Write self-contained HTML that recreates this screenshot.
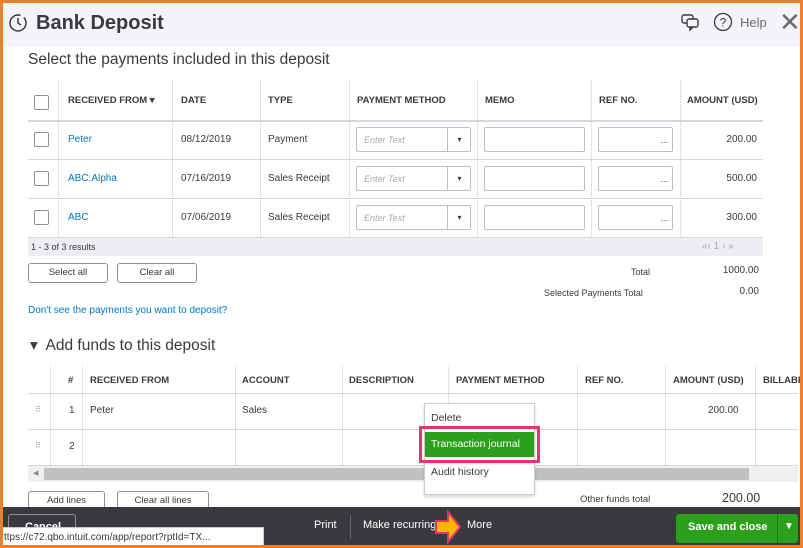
<!DOCTYPE html><html><head><style>
*{box-sizing:border-box;margin:0;padding:0}
body{width:803px;height:548px;overflow:hidden;background:#fff;font-family:"Liberation Sans",sans-serif;color:#393a3d;position:relative}
.a{position:absolute}
.f{border:3px solid #ee7f2d;position:absolute;left:0;top:0;width:803px;height:548px;z-index:20;pointer-events:none}
.hd{left:0;top:0;width:803px;height:47px;background:#f4f5f8}
.t{font-size:10px}
.h{font-size:9.5px;font-weight:bold;color:#393a3d}
.cb{width:15px;height:15px;border:1px solid #8d9096;background:#fff;border-radius:2px}
.ln{height:1px;background:#d4d7dc}
.vl{width:0;border-left:1px dotted #c8c8c8}
.lk{color:#0077c5;font-size:10px}
.in{height:25px;border:1px solid #babec5;background:#fff;border-radius:2px}
.btn{height:20px;border:1px solid #8d9096;border-radius:3px;font-size:9.5px;text-align:center;line-height:18px;background:#fff}
</style></head><body>
<div class="f"></div>
<div class="a hd"></div>
<svg class="a" style="left:8px;top:13px" width="20" height="20" viewBox="0 0 20 20"><circle cx="10" cy="10" r="8" fill="none" stroke="#393a3d" stroke-width="1.5" stroke-dasharray="40 4"/><path d="M10 5v5l3 2" fill="none" stroke="#393a3d" stroke-width="1.5"/></svg>
<div class="a" style="left:36px;top:12px;font-size:20px;font-weight:bold">Bank Deposit</div>
<svg class="a" style="left:680px;top:12px" width="20" height="20" viewBox="0 0 20 20"><rect x="2" y="3" width="11" height="8" rx="2" fill="none" stroke="#393a3d" stroke-width="1.4"/><rect x="7" y="7" width="11" height="8" rx="2" fill="#f4f5f8" stroke="#393a3d" stroke-width="1.4"/><path d="M10 15l0 3 3-3" fill="none" stroke="#393a3d" stroke-width="1.4"/></svg>
<svg class="a" style="left:713px;top:12px" width="20" height="20" viewBox="0 0 20 20"><circle cx="10" cy="10" r="8.5" fill="none" stroke="#393a3d" stroke-width="1.3"/><text x="10" y="14.5" font-size="12" text-anchor="middle" fill="#393a3d" font-family="Liberation Sans">?</text></svg>
<div class="a" style="left:740px;top:15px;font-size:13px;color:#6b6c72">Help</div>
<div class="a" style="left:779px;top:7px;font-size:26px;color:#6b6c72;font-weight:300">✕</div>
<div class="a" style="left:28px;top:51px;font-size:15.5px">Select the payments included in this deposit</div>
<div class="a cb" style="left:34px;top:95px"></div>
<div class="a h" style="left:68px;top:95px">RECEIVED FROM ▾</div>
<div class="a h" style="left:181px;top:95px">DATE</div>
<div class="a h" style="left:268px;top:95px">TYPE</div>
<div class="a h" style="left:357px;top:95px">PAYMENT METHOD</div>
<div class="a h" style="left:485px;top:95px">MEMO</div>
<div class="a h" style="left:599px;top:95px">REF NO.</div>
<div class="a h" style="left:687px;top:95px">AMOUNT (USD)</div>
<div class="a vl" style="left:58px;top:80px;height:157px"></div>
<div class="a vl" style="left:172px;top:80px;height:157px"></div>
<div class="a vl" style="left:260px;top:80px;height:157px"></div>
<div class="a vl" style="left:349px;top:80px;height:157px"></div>
<div class="a vl" style="left:477px;top:80px;height:157px"></div>
<div class="a vl" style="left:591px;top:80px;height:157px"></div>
<div class="a vl" style="left:680px;top:80px;height:157px"></div>
<div class="a ln" style="left:28px;top:120px;width:735px;height:2px"></div>
<div class="a ln" style="left:28px;top:159px;width:735px"></div>
<div class="a ln" style="left:28px;top:198px;width:735px"></div>
<div class="a ln" style="left:28px;top:237px;width:735px"></div>

<div class="a cb" style="left:34px;top:132px"></div><div class="a lk" style="left:68px;top:134px">Peter</div><div class="a t" style="left:181px;top:134px">08/12/2019</div><div class="a t" style="left:268px;top:134px">Payment</div>
<div class="a cb" style="left:34px;top:171px"></div><div class="a lk" style="left:68px;top:173px">ABC:Alpha</div><div class="a t" style="left:181px;top:173px">07/16/2019</div><div class="a t" style="left:268px;top:173px">Sales Receipt</div>
<div class="a cb" style="left:34px;top:210px"></div><div class="a lk" style="left:68px;top:212px">ABC</div><div class="a t" style="left:181px;top:212px">07/06/2019</div><div class="a t" style="left:268px;top:212px">Sales Receipt</div>
<script>
[127,166,205].forEach((y,i)=>{document.body.insertAdjacentHTML('beforeend',
`<div class="a in" style="left:356px;top:${y}px;width:115px"><span style="position:absolute;left:7px;top:7px;font-size:9px;font-style:italic;color:#aaa">Enter Text</span><span style="position:absolute;left:90px;top:0;height:23px;border-left:1px solid #babec5;width:24px;font-size:8px;text-align:center;line-height:23px">▾</span></div>
<div class="a in" style="left:484px;top:${y}px;width:101px"></div>
<div class="a in" style="left:598px;top:${y}px;width:75px"><span style="position:absolute;right:4px;top:7px;font-size:9px">...</span></div>
<div class="a t" style="right:46px;top:${y+7}px">${['200.00','500.00','300.00'][i]}</div>`)});
</script>
<div class="a" style="left:28px;top:238px;width:735px;height:18px;background:#eceef1"></div>
<div class="a" style="left:31px;top:242px;font-size:9px">1 - 3 of 3 results</div>
<div class="a" style="left:702px;top:241px;font-size:10px;color:#aaa">«‹ 1 › »</div>
<div class="a btn" style="left:28px;top:263px;width:80px">Select all</div>
<div class="a btn" style="left:117px;top:263px;width:80px">Clear all</div>
<div class="a t" style="left:631px;top:267px;font-size:9px">Total</div>
<div class="a t" style="right:44px;top:265px">1000.00</div>
<div class="a" style="left:544px;top:288px;font-size:9px">Selected Payments Total</div>
<div class="a t" style="right:44px;top:286px">0.00</div>
<div class="a lk" style="left:28px;top:305px">Don't see the payments you want to deposit?</div>
<div class="a" style="left:30px;top:336px;font-size:15.5px">▾&nbsp; Add funds to this deposit</div>
<div class="a h" style="left:68px;top:375px">#</div>
<div class="a h" style="left:90px;top:375px">RECEIVED FROM</div>
<div class="a h" style="left:242px;top:375px">ACCOUNT</div>
<div class="a h" style="left:349px;top:375px">DESCRIPTION</div>
<div class="a h" style="left:456px;top:375px">PAYMENT METHOD</div>
<div class="a h" style="left:585px;top:375px">REF NO.</div>
<div class="a h" style="left:673px;top:375px">AMOUNT (USD)</div>
<div class="a h" style="left:763px;top:375px">BILLABLE</div>
<div class="a vl" style="left:50px;top:366px;height:99px"></div>
<div class="a vl" style="left:82px;top:366px;height:99px"></div>
<div class="a vl" style="left:235px;top:366px;height:99px"></div>
<div class="a vl" style="left:342px;top:366px;height:99px"></div>
<div class="a vl" style="left:448px;top:366px;height:99px"></div>
<div class="a vl" style="left:577px;top:366px;height:99px"></div>
<div class="a vl" style="left:665px;top:366px;height:99px"></div>
<div class="a vl" style="left:755px;top:366px;height:99px"></div>
<div class="a ln" style="left:28px;top:393px;width:770px"></div>
<div class="a ln" style="left:28px;top:429px;width:770px"></div>
<div class="a ln" style="left:28px;top:465px;width:770px"></div>
<div class="a" style="left:35px;top:405px;font-size:8px;color:#999">⠿</div>
<div class="a" style="left:35px;top:441px;font-size:8px;color:#999">⠿</div>
<div class="a t" style="left:69px;top:405px">1</div><div class="a t" style="left:90px;top:405px">Peter</div><div class="a t" style="left:242px;top:405px">Sales</div><div class="a t" style="left:708px;top:405px">200.00</div>
<div class="a t" style="left:69px;top:441px">2</div>
<div class="a" style="left:28px;top:466px;width:770px;height:16px;background:#f0f0f0"></div>
<div class="a" style="left:44px;top:468px;width:705px;height:12px;background:#c1c1c1"></div>
<div class="a" style="left:33px;top:469px;font-size:7px;color:#888">◀</div>
<div class="a btn" style="left:28px;top:491px;width:77px">Add lines</div>
<div class="a btn" style="left:117px;top:491px;width:92px">Clear all lines</div>
<div class="a" style="left:580px;top:494px;font-size:9.5px">Other funds total</div>
<div class="a" style="left:722px;top:491px;font-size:12.5px">200.00</div>
<div class="a" style="left:424px;top:403px;width:111px;height:92px;background:#fff;border:1px solid #ccc;box-shadow:0 2px 3px rgba(0,0,0,.15)"></div>
<div class="a" style="left:431px;top:412px;font-size:10.5px">Delete</div>
<div class="a" style="left:419px;top:426px;width:121px;height:37px;border:3px solid #e8336b"></div>
<div class="a" style="left:425px;top:432px;width:109px;height:25px;background:#2ca01c;color:#fff;font-size:10.5px;line-height:25px;padding-left:6px">Transaction journal</div>
<div class="a" style="left:431px;top:466px;font-size:10.5px">Audit history</div>
<div class="a" style="left:0;top:507px;width:803px;height:41px;background:#393a3d"></div>
<div class="a" style="left:8px;top:514px;width:68px;height:30px;border:1px solid #8d9096;border-radius:3px;color:#fff;font-size:11px;font-weight:bold;padding:6px 16px">Cancel</div>
<div class="a" style="left:0;top:527px;width:264px;height:21px;background:#fff;border:1px solid #ccc;font-size:10px;padding:4px 3px;color:#393a3d;z-index:5">ttps://c72.qbo.intuit.com/app/report?rptId=TX...</div>
<div class="a" style="left:314px;top:519px;color:#fff;font-size:11px">Print</div>
<div class="a" style="left:350px;top:515px;height:24px;border-left:1px solid #666"></div>
<div class="a" style="left:363px;top:519px;color:#fff;font-size:11px">Make recurring</div>
<svg class="a" style="left:434px;top:510px" width="28" height="34" viewBox="0 0 28 34"><path d="M2 11h12V2l12 15-12 15v-9H2z" fill="#f9b700" stroke="#e8336b" stroke-width="2"/></svg>
<div class="a" style="left:467px;top:519px;color:#fff;font-size:11px">More</div>
<div class="a" style="left:676px;top:514px;width:122px;height:29px;background:#2ca01c;border-radius:3px"></div>
<div class="a" style="left:688px;top:521px;color:#fff;font-size:11px;font-weight:bold">Save and close</div>
<div class="a" style="left:777px;top:514px;height:29px;border-left:1px solid #1f7a14"></div>
<div class="a" style="left:784px;top:521px;color:#fff;font-size:10px">▼</div>
</body></html>
